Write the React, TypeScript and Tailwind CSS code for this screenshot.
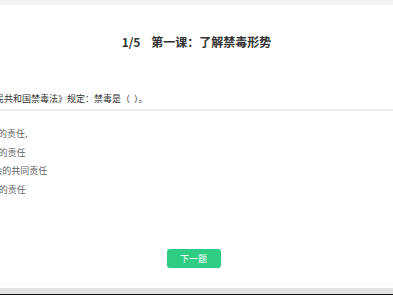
const font = { fontFamily: '"Noto Sans CJK SC", "Microsoft YaHei", sans-serif' };

const options = [
  "A. 各政府的责任,",
  "B. 公安局的责任",
  "C.   全社会的共同责任",
  "D. 每个人的责任",
];

export default function App() {
  return (
    <div className="w-[393px] h-[295px] bg-white flex flex-col overflow-hidden" style={font}>
      <div className="h-[4px] bg-[#f1f1f1] shrink-0" />
      <div className="h-[1px] bg-[#f7f7f7] shrink-0" />

      <div className="flex-1 flex flex-col">
        <h1 className="mt-[29px] text-center text-[12px] leading-[16px] font-bold text-[#333] whitespace-pre">
          {"1/5    第一课：了解禁毒形势"}
        </h1>

        <div className="ml-[-41px] mt-[42px]">
          <p className="text-[9px] leading-[14px] text-[#333] whitespace-pre">
            {"《中华人民共和国禁毒法》规定：禁毒是（  ）。"}
          </p>
          <div className="mt-[3px] h-[2px] bg-[#ececec]" />
          <ul className="ml-[2px] mt-[16px] flex flex-col gap-[4.5px]">
            {options.map((o) => (
              <li key={o} className="text-[9px] leading-[14px] text-[#666] whitespace-pre">
                {o}
              </li>
            ))}
          </ul>
        </div>

        <div className="flex justify-center mt-[52px] pr-[6px]">
          <button className="w-[54px] h-[19px] rounded-[3px] bg-[#2fcd83] text-white text-[9px] leading-[19px]">
            下一题
          </button>
        </div>
      </div>

      <div className="h-[1px] bg-[#f6f6f6] shrink-0" />
      <div className="h-[4px] bg-white shrink-0" />
      <div className="h-[6px] bg-[#e4e4e4] shrink-0" />
      <div className="h-[1px] bg-[#111] shrink-0" />
    </div>
  );
}
